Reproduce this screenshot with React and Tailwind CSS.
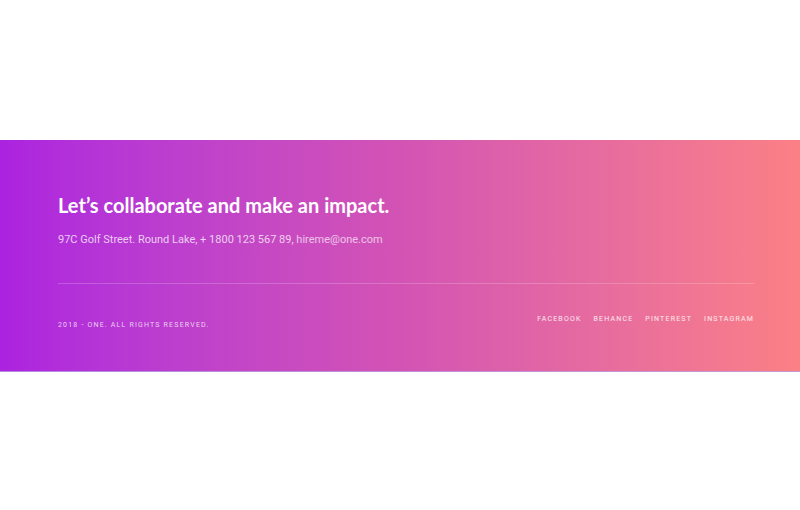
export default function App() {
  return (
    <div className="flex min-h-screen flex-col bg-white py-[140px]">
      <footer className="bg-linear-to-r from-[#ac22e0] via-[#d353b4] to-[#fb8085] font-[Roboto,sans-serif] text-white">
        <div className="pt-[51px] pr-[46px] pb-[41px] pl-[58px]">
          <h2 className="font-[Lato,sans-serif] text-[20px] leading-7 font-bold">Let’s collaborate and make an impact.</h2>
          <p className="mt-[13px] text-[11px] leading-4 text-white/75">
            97C Golf Street. Round Lake, + 1800 123 567 89,{' '}
            <a href="mailto:hireme@one.com" className="text-white/65">hireme@one.com</a>
          </p>
          <div className="mt-[35px] flex items-start justify-between border-t border-white/20 pt-[30px] text-[7px] leading-[10px] tracking-[0.17em] uppercase">
            <p className="pt-1.5 text-white/75">2018 - ONE. All rights reserved.</p>
            <nav className="flex gap-3 text-white/85">
              <a href="#facebook">Facebook</a>
              <a href="#behance">Behance</a>
              <a href="#pinterest">Pinterest</a>
              <a href="#instagram">Instagram</a>
            </nav>
          </div>
        </div>
        <div className="h-px bg-[#b9a0e0]/80" />
      </footer>
    </div>
  );
}
